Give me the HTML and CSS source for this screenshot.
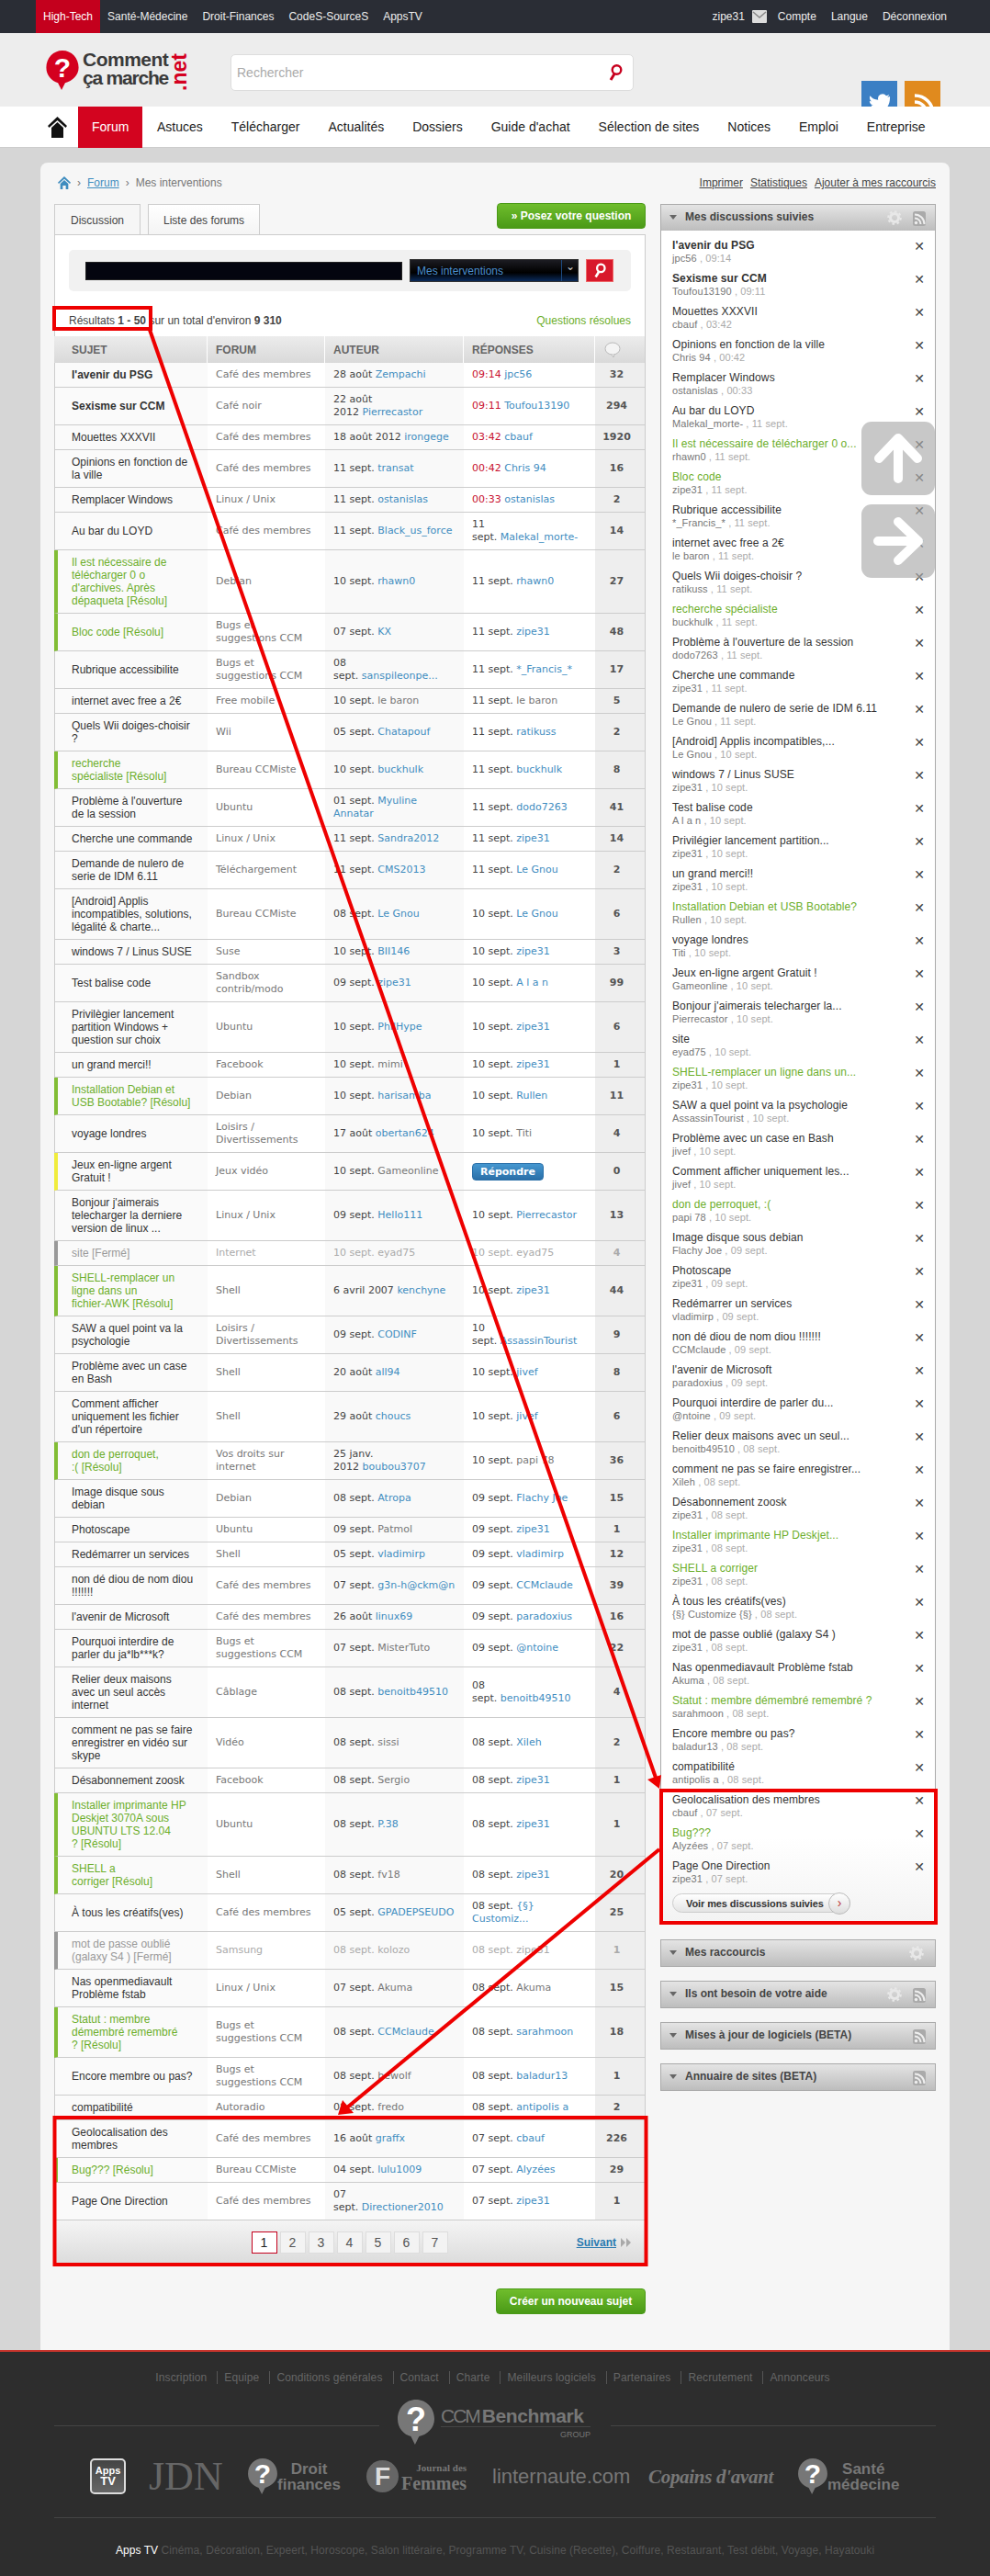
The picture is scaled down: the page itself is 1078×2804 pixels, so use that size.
FILE: index.html
```html
<!DOCTYPE html>
<html lang="fr">

<head>
    <meta charset="UTF-8">
    <title>Mes interventions - Forum</title>
    <link rel="stylesheet" href="styles.css">
</head>

<body>
    <svg class="defs" width="0" height="0">
        <symbol id="gear" viewBox="0 0 16 16">
            <circle cx="8" cy="8" r="4.5" fill="none" stroke="#e8e8e8" stroke-width="3" />
            <circle cx="8" cy="8" r="6.8" fill="none" stroke="#e8e8e8" stroke-width="2" stroke-dasharray="2.6 2.7" />
        </symbol>
        <symbol id="rss" viewBox="0 0 14 16">
            <rect width="14" height="16" rx="2.5" fill="#aaa" />
            <circle cx="3.5" cy="12.5" r="1.7" fill="#eee" />
            <path d="M2 7.5a6.5 6.5 0 0 1 6.5 6.5M2 3.5A10.500 10.500 0 0 1 12.500 14" fill="none" stroke="#eee" stroke-width="2" />
        </symbol>
        <symbol id="mark" viewBox="0 0 36 44">
            <path d="M18 0C8 0 0 8 0 19c0 9 6 15 13 17l4 8 4-8c8-2 15-8 15-17C36 8 28 0 18 0z" />
        </symbol>
    </svg>

    <div class="topbar">
        <div class="toplinks">
            <a class="on">High-Tech</a>
            <a>Santé-Médecine</a>
            <a>Droit-Finances</a>
            <a>CodeS-SourceS</a>
            <a>AppsTV</a>
        </div>
        <div class="toplinks">
            <a class="me">zipe31</a>
            <svg class="mail" width="16" height="14" viewBox="0 0 16 14">
                <rect width="16" height="14" rx="1" fill="#ddd" />
                <path d="M1 2l7 6 7-6" fill="none" stroke="#888" stroke-width="1.500" />
            </svg>
            <a>Compte</a>
            <a>Langue</a>
            <a>Déconnexion</a>
        </div>
    </div>

    <div class="header">
        <div class="logo">
            <div class="bubble red">
                <svg width="36" height="43"><use href="#mark" /></svg>
                <span class="qm">?</span>
            </div>
            <div class="logoName">
                <span class="l1">Comment</span>
                <span class="l2">ça marche</span>
            </div>
            <span class="dotnet">.net</span>
        </div>
        <div class="search">
            <span>Rechercher</span>
            <svg width="16" height="20" viewBox="0 0 16 20">
                <circle cx="9.500" cy="7" r="4.800" fill="none" stroke="#c8001e" stroke-width="2.400" />
                <path d="M7 11.500L3 18" stroke="#c8001e" stroke-width="3" />
            </svg>
        </div>
        <div class="social">
            <div class="tw">
                <svg width="24" height="24" viewBox="0 0 24 24">
                    <path d="M23 5c-1 .5-2 .7-3 .8 1-.6 2-1.600 2.300-2.800-1 .6-2.100 1-3.300 1.200a5 5 0 0 0-8.700 4.600C6.300 8.600 3.300 7 1.500 4.300c-1 1.800-.5 4.500 1.500 6-.8 0-1.600-.2-2.200-.6 0 2.500 1.700 4.500 4 5-.7.200-1.500.2-2.200.1.600 2 2.500 3.400 4.600 3.500C5.200 20 2.600 20.800 0 20.500 9 26 24 21 23 5z" fill="#fff" />
                </svg>
            </div>
            <div class="rs">
                <svg width="22" height="26" viewBox="0 0 22 26">
                    <circle cx="5" cy="21" r="3" fill="#fff" />
                    <path d="M2 11a13 13 0 0 1 13 13M2 4a20 20 0 0 1 20 20" fill="none" stroke="#fff" stroke-width="3.500" />
                </svg>
            </div>
        </div>
    </div>

    <div class="nav">
        <svg class="home" width="21" height="23" viewBox="0 0 21 23">
            <path d="M10.500 0L21 10l-1.500 2L10.500 4 1.500 12 0 10z" fill="#111" />
            <path d="M4 12l6.500-6 6.500 6v11H4z" fill="#111" />
        </svg>
        <a class="on">Forum</a>
        <a>Astuces</a>
        <a>Télécharger</a>
        <a>Actualités</a>
        <a>Dossiers</a>
        <a>Guide d'achat</a>
        <a>Sélection de sites</a>
        <a>Notices</a>
        <a>Emploi</a>
        <a>Entreprise</a>
    </div>

    <div class="page">
        <div class="crumbs">
            <div class="trail">
                <svg width="14" height="14" viewBox="0 0 21 21">
                    <path d="M10.500 0L21 10l-1.500 2L10.500 4 1.500 12 0 10z" fill="#3f8dbf" />
                    <path d="M4 12l6.500-6 6.500 6v9h-4v-6H8v6H4z" fill="#3f8dbf" />
                </svg>
                <span>›</span><a>Forum</a><span>›</span><span>Mes interventions</span>
            </div>
            <div class="tools">
                <a>Imprimer</a>
                <a>Statistiques</a>
                <a>Ajouter à mes raccourcis</a>
            </div>
        </div>

        <div class="columns">
            <div class="mainCol">
                <div class="tabRow">
                    <div class="tabs">
                        <div class="tab active">Discussion</div>
                        <div class="tab">Liste des forums</div>
                    </div>
                    <a class="greenBtn ask">» Posez votre question</a>
                </div>

                <div class="box">
                    <div class="filter">
                        <div class="blackInput"></div>
                        <div class="blackSelect"><span>Mes interventions</span><i>⌄</i></div>
                        <div class="goBtn">
                            <svg width="14" height="19" viewBox="0 0 16 20">
                                <circle cx="9.500" cy="7" r="4.800" fill="none" stroke="#fff" stroke-width="2.600" />
                                <path d="M7 11.500L3 18" stroke="#fff" stroke-width="3" />
                            </svg>
                        </div>
                    </div>

                    <div class="results">
                        <span>Résultats <b>1 - 50</b> sur un total d'environ <b>9 310</b></span>
                        <a>Questions résolues</a>
                    </div>

                    <table class="topics">
                        <thead>
                            <tr>
                                <th>SUJET</th>
                                <th>FORUM</th>
                                <th>AUTEUR</th>
                                <th>RÉPONSES</th>
                                <th>
                                    <svg width="18" height="17" viewBox="0 0 18 17">
                                        <ellipse cx="9" cy="7.500" rx="8" ry="6.500" fill="#f4f4f4" stroke="#bbb" />
                                        <path d="M8 14l2 3 1-3.500" fill="#f4f4f4" stroke="#bbb" />
                                    </svg>
                                </th>
                            </tr>
                        </thead>
                        <tbody>
                            <tr class="new"><td>l'avenir du PSG</td><td>Café des membres</td><td>28 août <a>Zempachi</a></td><td><span class="hr">09:14</span> <a>jpc56</a></td><td>32</td></tr>
                            <tr class="new"><td>Sexisme sur CCM</td><td>Café noir</td><td>22 août<br>2012 <a>Pierrecastor</a></td><td><span class="hr">09:11</span> <a>Toufou13190</a></td><td>294</td></tr>
                            <tr><td>Mouettes XXXVII</td><td>Café des membres</td><td>18 août 2012 <a>irongege</a></td><td><span class="hr">03:42</span> <a>cbauf</a></td><td>1920</td></tr>
                            <tr><td>Opinions en fonction de<br>la ville</td><td>Café des membres</td><td>11 sept. <a>transat</a></td><td><span class="hr">00:42</span> <a>Chris 94</a></td><td>16</td></tr>
                            <tr><td>Remplacer Windows</td><td>Linux / Unix</td><td>11 sept. <a>ostanislas</a></td><td><span class="hr">00:33</span> <a>ostanislas</a></td><td>2</td></tr>
                            <tr><td>Au bar du LOYD</td><td>Café des membres</td><td>11 sept. <a>Black_us_force</a></td><td>11<br>sept. <a>Malekal_morte-</a></td><td>14</td></tr>
                            <tr class="solved"><td>Il est nécessaire de<br>télécharger 0 o<br>d'archives. Après<br>dépaqueta [Résolu]</td><td>Debian</td><td>10 sept. <a>rhawn0</a></td><td>11 sept. <a>rhawn0</a></td><td>27</td></tr>
                            <tr class="solved"><td>Bloc code [Résolu]</td><td>Bugs et<br>suggestions CCM</td><td>07 sept. <a>KX</a></td><td>11 sept. <a>zipe31</a></td><td>48</td></tr>
                            <tr><td>Rubrique accessibilite</td><td>Bugs et<br>suggestions CCM</td><td>08<br>sept. <a>sanspileonpe...</a></td><td>11 sept. <a>*_Francis_*</a></td><td>17</td></tr>
                            <tr><td>internet avec free a 2€</td><td>Free mobile</td><td>10 sept. <span class="nm">le baron</span></td><td>11 sept. <span class="nm">le baron</span></td><td>5</td></tr>
                            <tr><td>Quels Wii doiges-choisir<br>?</td><td>Wii</td><td>05 sept. <a>Chatapouf</a></td><td>11 sept. <a>ratikuss</a></td><td>2</td></tr>
                            <tr class="solved"><td>recherche<br>spécialiste [Résolu]</td><td>Bureau CCMiste</td><td>10 sept. <a>buckhulk</a></td><td>11 sept. <a>buckhulk</a></td><td>8</td></tr>
                            <tr><td>Problème à l'ouverture<br>de la session</td><td>Ubuntu</td><td>01 sept. <a>Myuline<br>Annatar</a></td><td>11 sept. <a>dodo7263</a></td><td>41</td></tr>
                            <tr><td>Cherche une commande</td><td>Linux / Unix</td><td>11 sept. <a>Sandra2012</a></td><td>11 sept. <a>zipe31</a></td><td>14</td></tr>
                            <tr><td>Demande de nulero de<br>serie de IDM 6.11</td><td>Téléchargement</td><td>11 sept. <a>CMS2013</a></td><td>11 sept. <a>Le Gnou</a></td><td>2</td></tr>
                            <tr><td>[Android] Applis<br>incompatibles, solutions,<br>légalité &amp; charte...</td><td>Bureau CCMiste</td><td>08 sept. <a>Le Gnou</a></td><td>10 sept. <a>Le Gnou</a></td><td>6</td></tr>
                            <tr><td>windows 7 / Linus SUSE</td><td>Suse</td><td>10 sept. <a>BII146</a></td><td>10 sept. <a>zipe31</a></td><td>3</td></tr>
                            <tr><td>Test balise code</td><td>Sandbox<br>contrib/modo</td><td>09 sept. <a>zipe31</a></td><td>10 sept. <a>A l a n</a></td><td>99</td></tr>
                            <tr><td>Privilègier lancement<br>partition Windows +<br>question sur choix</td><td>Ubuntu</td><td>10 sept. <a>PhilHype</a></td><td>10 sept. <a>zipe31</a></td><td>6</td></tr>
                            <tr><td>un grand merci!!</td><td>Facebook</td><td>10 sept. <span class="nm">mimi</span></td><td>10 sept. <a>zipe31</a></td><td>1</td></tr>
                            <tr class="solved"><td>Installation Debian et<br>USB Bootable? [Résolu]</td><td>Debian</td><td>10 sept. <a>harisamba</a></td><td>10 sept. <a>Rullen</a></td><td>11</td></tr>
                            <tr><td>voyage londres</td><td>Loisirs /<br>Divertissements</td><td>17 août <a>obertan624</a></td><td>10 sept. <span class="nm">Titi</span></td><td>4</td></tr>
                            <tr class="open"><td>Jeux en-ligne argent<br>Gratuit !</td><td>Jeux vidéo</td><td>10 sept. <span class="nm">Gameonline</span></td><td><a class="answer">Répondre</a></td><td>0</td></tr>
                            <tr><td>Bonjour j'aimerais<br>telecharger la derniere<br>version de linux ...</td><td>Linux / Unix</td><td>09 sept. <a>Hello111</a></td><td>10 sept. <a>Pierrecastor</a></td><td>13</td></tr>
                            <tr class="closed"><td>site [Fermé]</td><td>Internet</td><td>10 sept. eyad75</td><td>10 sept. eyad75</td><td>4</td></tr>
                            <tr class="solved"><td>SHELL-remplacer un<br>ligne dans un<br>fichier-AWK [Résolu]</td><td>Shell</td><td>6 avril 2007 <a>kenchyne</a></td><td>10 sept. <a>zipe31</a></td><td>44</td></tr>
                            <tr><td>SAW a quel point va la<br>psychologie</td><td>Loisirs /<br>Divertissements</td><td>09 sept. <a>CODINF</a></td><td>10<br>sept. <a>AssassinTourist</a></td><td>9</td></tr>
                            <tr><td>Problème avec un case<br>en Bash</td><td>Shell</td><td>20 août <a>all94</a></td><td>10 sept. <a>jivef</a></td><td>8</td></tr>
                            <tr><td>Comment afficher<br>uniquement les fichier<br>d'un répertoire</td><td>Shell</td><td>29 août <a>choucs</a></td><td>10 sept. <a>jivef</a></td><td>6</td></tr>
                            <tr class="solved"><td>don de perroquet,<br>:( [Résolu]</td><td>Vos droits sur<br>internet</td><td>25 janv.<br>2012 <a>boubou3707</a></td><td>10 sept. <span class="nm">papi 78</span></td><td>36</td></tr>
                            <tr><td>Image disque sous<br>debian</td><td>Debian</td><td>08 sept. <a>Atropa</a></td><td>09 sept. <a>Flachy Joe</a></td><td>15</td></tr>
                            <tr><td>Photoscape</td><td>Ubuntu</td><td>09 sept. <span class="nm">Patmol</span></td><td>09 sept. <a>zipe31</a></td><td>1</td></tr>
                            <tr><td>Redémarrer un services</td><td>Shell</td><td>05 sept. <a>vladimirp</a></td><td>09 sept. <a>vladimirp</a></td><td>12</td></tr>
                            <tr><td>non dé diou de nom diou<br>!!!!!!!</td><td>Café des membres</td><td>07 sept. <a>g3n-h@ckm@n</a></td><td>09 sept. <a>CCMclaude</a></td><td>39</td></tr>
                            <tr><td>l'avenir de Microsoft</td><td>Café des membres</td><td>26 août <a>linux69</a></td><td>09 sept. <a>paradoxius</a></td><td>16</td></tr>
                            <tr><td>Pourquoi interdire de<br>parler du ja*lb***k?</td><td>Bugs et<br>suggestions CCM</td><td>07 sept. <span class="nm">MisterTuto</span></td><td>09 sept. <a>@ntoine</a></td><td>22</td></tr>
                            <tr><td>Relier deux maisons<br>avec un seul accès<br>internet</td><td>Câblage</td><td>08 sept. <a>benoitb49510</a></td><td>08<br>sept. <a>benoitb49510</a></td><td>4</td></tr>
                            <tr><td>comment ne pas se faire<br>enregistrer en vidéo sur<br>skype</td><td>Vidéo</td><td>08 sept. <span class="nm">sissi</span></td><td>08 sept. <a>Xileh</a></td><td>2</td></tr>
                            <tr><td>Désabonnement zoosk</td><td>Facebook</td><td>08 sept. <span class="nm">Sergio</span></td><td>08 sept. <a>zipe31</a></td><td>1</td></tr>
                            <tr class="solved"><td>Installer imprimante HP<br>Deskjet 3070A sous<br>UBUNTU LTS 12.04<br>? [Résolu]</td><td>Ubuntu</td><td>08 sept. <a>P.38</a></td><td>08 sept. <a>zipe31</a></td><td>1</td></tr>
                            <tr class="solved"><td>SHELL a<br>corriger [Résolu]</td><td>Shell</td><td>08 sept. <span class="nm">fv18</span></td><td>08 sept. <a>zipe31</a></td><td>20</td></tr>
                            <tr><td>À tous les créatifs(ves)</td><td>Café des membres</td><td>05 sept. <a>GPADEPSEUDO</a></td><td>08 sept. <a>{§}<br>Customiz...</a></td><td>25</td></tr>
                            <tr class="closed"><td>mot de passe oublié<br>(galaxy S4 ) [Fermé]</td><td>Samsung</td><td>08 sept. kolozo</td><td>08 sept. zipe31</td><td>1</td></tr>
                            <tr><td>Nas openmediavault<br>Problème fstab</td><td>Linux / Unix</td><td>07 sept. <span class="nm">Akuma</span></td><td>08 sept. <span class="nm">Akuma</span></td><td>15</td></tr>
                            <tr class="solved"><td>Statut : membre<br>démembré remembré<br>? [Résolu]</td><td>Bugs et<br>suggestions CCM</td><td>08 sept. <a>CCMclaude</a></td><td>08 sept. <a>sarahmoon</a></td><td>18</td></tr>
                            <tr><td>Encore membre ou pas?</td><td>Bugs et<br>suggestions CCM</td><td>08 sept. <span class="nm">bewolf</span></td><td>08 sept. <a>baladur13</a></td><td>1</td></tr>
                            <tr><td>compatibilité</td><td>Autoradio</td><td>08 sept. <span class="nm">fredo</span></td><td>08 sept. <a>antipolis a</a></td><td>2</td></tr>
                            <tr><td>Geolocalisation des<br>membres</td><td>Café des membres</td><td>16 août <a>graffx</a></td><td>07 sept. <a>cbauf</a></td><td>226</td></tr>
                            <tr class="solved"><td>Bug??? [Résolu]</td><td>Bureau CCMiste</td><td>04 sept. <a>lulu1009</a></td><td>07 sept. <a>Alyzées</a></td><td>29</td></tr>
                            <tr><td>Page One Direction</td><td>Café des membres</td><td>07<br>sept. <a>Directioner2010</a></td><td>07 sept. <a>zipe31</a></td><td>1</td></tr>
                        </tbody>
                    </table>

                    <div class="pager">
                        <div></div>
                        <div class="pages">
                            <a class="cur">1</a><a>2</a><a>3</a><a>4</a><a>5</a><a>6</a><a>7</a>
                        </div>
                        <div class="next">
                            <a>Suivant</a>
                            <svg width="11" height="10" viewBox="0 0 11 10"><path d="M0 0l5 5-5 5zM6 0l5 5-5 5z" fill="#aaa" /></svg>
                        </div>
                    </div>
                </div>

                <div class="createRow"><a class="greenBtn create">Créer un nouveau sujet</a></div>
            </div>

            <div class="sideCol">
                <div class="panel openPanel">
                    <div class="panelHead">
                        <i></i><span>Mes discussions suivies</span>
                        <svg class="gear"><use href="#gear" /></svg>
                        <svg class="rss"><use href="#rss" /></svg>
                    </div>
                    <div class="panelBody">
                        <ul class="follow">
                            <li class="new"><div><p>l'avenir du PSG</p><small>jpc56 <span>, 09:14</span></small></div><b>✕</b></li>
                            <li class="new"><div><p>Sexisme sur CCM</p><small>Toufou13190 <span>, 09:11</span></small></div><b>✕</b></li>
                            <li><div><p>Mouettes XXXVII</p><small>cbauf <span>, 03:42</span></small></div><b>✕</b></li>
                            <li><div><p>Opinions en fonction de la ville</p><small>Chris 94 <span>, 00:42</span></small></div><b>✕</b></li>
                            <li><div><p>Remplacer Windows</p><small>ostanislas <span>, 00:33</span></small></div><b>✕</b></li>
                            <li><div><p>Au bar du LOYD</p><small>Malekal_morte- <span>, 11 sept.</span></small></div><b>✕</b></li>
                            <li class="solved"><div><p>Il est nécessaire de télécharger 0 o...</p><small>rhawn0 <span>, 11 sept.</span></small></div><b>✕</b></li>
                            <li class="solved"><div><p>Bloc code</p><small>zipe31 <span>, 11 sept.</span></small></div><b>✕</b></li>
                            <li><div><p>Rubrique accessibilite</p><small>*_Francis_* <span>, 11 sept.</span></small></div><b>✕</b></li>
                            <li><div><p>internet avec free a 2€</p><small>le baron <span>, 11 sept.</span></small></div><b>✕</b></li>
                            <li><div><p>Quels Wii doiges-choisir ?</p><small>ratikuss <span>, 11 sept.</span></small></div><b>✕</b></li>
                            <li class="solved"><div><p>recherche spécialiste</p><small>buckhulk <span>, 11 sept.</span></small></div><b>✕</b></li>
                            <li><div><p>Problème à l'ouverture de la session</p><small>dodo7263 <span>, 11 sept.</span></small></div><b>✕</b></li>
                            <li><div><p>Cherche une commande</p><small>zipe31 <span>, 11 sept.</span></small></div><b>✕</b></li>
                            <li><div><p>Demande de nulero de serie de IDM 6.11</p><small>Le Gnou <span>, 11 sept.</span></small></div><b>✕</b></li>
                            <li><div><p>[Android] Applis incompatibles,...</p><small>Le Gnou <span>, 10 sept.</span></small></div><b>✕</b></li>
                            <li><div><p>windows 7 / Linus SUSE</p><small>zipe31 <span>, 10 sept.</span></small></div><b>✕</b></li>
                            <li><div><p>Test balise code</p><small>A l a n <span>, 10 sept.</span></small></div><b>✕</b></li>
                            <li><div><p>Privilégier lancement partition...</p><small>zipe31 <span>, 10 sept.</span></small></div><b>✕</b></li>
                            <li><div><p>un grand merci!!</p><small>zipe31 <span>, 10 sept.</span></small></div><b>✕</b></li>
                            <li class="solved"><div><p>Installation Debian et USB Bootable?</p><small>Rullen <span>, 10 sept.</span></small></div><b>✕</b></li>
                            <li><div><p>voyage londres</p><small>Titi <span>, 10 sept.</span></small></div><b>✕</b></li>
                            <li><div><p>Jeux en-ligne argent Gratuit !</p><small>Gameonline <span>, 10 sept.</span></small></div><b>✕</b></li>
                            <li><div><p>Bonjour j'aimerais telecharger la...</p><small>Pierrecastor <span>, 10 sept.</span></small></div><b>✕</b></li>
                            <li><div><p>site</p><small>eyad75 <span>, 10 sept.</span></small></div><b>✕</b></li>
                            <li class="solved"><div><p>SHELL-remplacer un ligne dans un...</p><small>zipe31 <span>, 10 sept.</span></small></div><b>✕</b></li>
                            <li><div><p>SAW a quel point va la psychologie</p><small>AssassinTourist <span>, 10 sept.</span></small></div><b>✕</b></li>
                            <li><div><p>Problème avec un case en Bash</p><small>jivef <span>, 10 sept.</span></small></div><b>✕</b></li>
                            <li><div><p>Comment afficher uniquement les...</p><small>jivef <span>, 10 sept.</span></small></div><b>✕</b></li>
                            <li class="solved"><div><p>don de perroquet, :(</p><small>papi 78 <span>, 10 sept.</span></small></div><b>✕</b></li>
                            <li><div><p>Image disque sous debian</p><small>Flachy Joe <span>, 09 sept.</span></small></div><b>✕</b></li>
                            <li><div><p>Photoscape</p><small>zipe31 <span>, 09 sept.</span></small></div><b>✕</b></li>
                            <li><div><p>Redémarrer un services</p><small>vladimirp <span>, 09 sept.</span></small></div><b>✕</b></li>
                            <li><div><p>non dé diou de nom diou !!!!!!!</p><small>CCMclaude <span>, 09 sept.</span></small></div><b>✕</b></li>
                            <li><div><p>l'avenir de Microsoft</p><small>paradoxius <span>, 09 sept.</span></small></div><b>✕</b></li>
                            <li><div><p>Pourquoi interdire de parler du...</p><small>@ntoine <span>, 09 sept.</span></small></div><b>✕</b></li>
                            <li><div><p>Relier deux maisons avec un seul...</p><small>benoitb49510 <span>, 08 sept.</span></small></div><b>✕</b></li>
                            <li><div><p>comment ne pas se faire enregistrer...</p><small>Xileh <span>, 08 sept.</span></small></div><b>✕</b></li>
                            <li><div><p>Désabonnement zoosk</p><small>zipe31 <span>, 08 sept.</span></small></div><b>✕</b></li>
                            <li class="solved"><div><p>Installer imprimante HP Deskjet...</p><small>zipe31 <span>, 08 sept.</span></small></div><b>✕</b></li>
                            <li class="solved"><div><p>SHELL a corriger</p><small>zipe31 <span>, 08 sept.</span></small></div><b>✕</b></li>
                            <li><div><p>À tous les créatifs(ves)</p><small>{§} Customize {§} <span>, 08 sept.</span></small></div><b>✕</b></li>
                            <li><div><p>mot de passe oublié (galaxy S4 )</p><small>zipe31 <span>, 08 sept.</span></small></div><b>✕</b></li>
                            <li><div><p>Nas openmediavault Problème fstab</p><small>Akuma <span>, 08 sept.</span></small></div><b>✕</b></li>
                            <li class="solved"><div><p>Statut : membre démembré remembré ?</p><small>sarahmoon <span>, 08 sept.</span></small></div><b>✕</b></li>
                            <li><div><p>Encore membre ou pas?</p><small>baladur13 <span>, 08 sept.</span></small></div><b>✕</b></li>
                            <li><div><p>compatibilité</p><small>antipolis a <span>, 08 sept.</span></small></div><b>✕</b></li>
                            <li><div><p>Geolocalisation des membres</p><small>cbauf <span>, 07 sept.</span></small></div><b>✕</b></li>
                            <li class="solved"><div><p>Bug???</p><small>Alyzées <span>, 07 sept.</span></small></div><b>✕</b></li>
                            <li><div><p>Page One Direction</p><small>zipe31 <span>, 07 sept.</span></small></div><b>✕</b></li>
                        </ul>
                        <a class="seeAll"><span>Voir mes discussions suivies</span><i>›</i></a>
                    </div>
                </div>

                <div class="panel">
                    <div class="panelHead"><i></i><span>Mes raccourcis</span><svg class="gear solo"><use href="#gear" /></svg></div>
                </div>
                <div class="panel">
                    <div class="panelHead"><i></i><span>Ils ont besoin de votre aide</span><svg class="gear"><use href="#gear" /></svg><svg class="rss"><use href="#rss" /></svg></div>
                </div>
                <div class="panel">
                    <div class="panelHead"><i></i><span>Mises à jour de logiciels (BETA)</span><svg class="rss"><use href="#rss" /></svg></div>
                </div>
                <div class="panel">
                    <div class="panelHead"><i></i><span>Annuaire de sites (BETA)</span><svg class="rss"><use href="#rss" /></svg></div>
                </div>
            </div>
        </div>
    </div>

    <div class="footer">
        <div class="footLinks">
            <a>Inscription</a><a>Equipe</a><a>Conditions générales</a><a>Contact</a><a>Charte</a><a>Meilleurs logiciels</a><a>Partenaires</a><a>Recrutement</a><a>Annonceurs</a>
        </div>

        <div class="groupRow">
            <hr>
            <div class="groupLogo">
                <div class="bubble grey big">
                    <svg width="40" height="49"><use href="#mark" /></svg>
                    <span class="qm">?</span>
                </div>
                <div class="groupName">
                    <div class="gn"><span>CCM</span><b>Benchmark</b></div>
                    <small>GROUP</small>
                </div>
            </div>
            <hr>
        </div>

        <div class="brands">
            <div class="appsTv"><span>Apps</span><span>TV</span></div>
            <div class="jdn">JDN</div>
            <div class="duo droit">
                <div class="bubble grey"><svg width="32" height="39"><use href="#mark" /></svg><span class="qm">?</span></div>
                <div><span>Droit</span><span>finances</span></div>
            </div>
            <div class="femmes">
                <div class="disc"><span>F</span></div>
                <div><small>Journal des</small><b>Femmes</b></div>
            </div>
            <div class="linter">linternaute.com</div>
            <div class="copains">Copains d'avant</div>
            <div class="duo sante">
                <div class="bubble grey"><svg width="32" height="39"><use href="#mark" /></svg><span class="qm">?</span></div>
                <div><span>Santé</span><span>médecine</span></div>
            </div>
        </div>

        <hr class="footRule">

        <p class="footThemes"><b>Apps TV</b> Cinéma, Décoration, Expeert, Horoscope, Salon littéraire, Programme TV, Cuisine (Recette), Coiffure, Restaurant, Test débit, Voyage, Hayatouki</p>
    </div>

    <!-- annotations drawn over the capture -->
    <svg class="notes" width="1078" height="2804">
        <g fill="none" stroke="#ee0000" stroke-width="4">
            <rect x="59" y="335" width="105" height="23" />
            <rect x="59.500" y="2305" width="644" height="160" />
            <rect x="720" y="1949" width="299" height="144" />
            <path d="M163 359L714 1935" />
            <path d="M718 2013L378 2294" />
        </g>
        <path d="M718 1947L705 1937 720 1932z" fill="#ee0000" />
        <path d="M368 2302L373 2286 385 2300z" fill="#ee0000" />
    </svg>

    <div class="jump">
        <div class="jumpBtn">
            <svg width="56" height="56" viewBox="0 0 56 56">
                <path d="M28 6v44M7 28L28 6l21 22" fill="none" stroke="#fff" stroke-width="10" stroke-linecap="round" stroke-linejoin="round" />
            </svg>
        </div>
        <div class="jumpBtn">
            <svg width="56" height="56" viewBox="0 0 56 56">
                <path d="M6 28h44M28 7l22 21-22 21" fill="none" stroke="#fff" stroke-width="10" stroke-linecap="round" stroke-linejoin="round" />
            </svg>
        </div>
    </div>
</body>

</html>
```

FILE: styles.css
```css
* {
    box-sizing: border-box;
    margin: 0;
    padding: 0;
}

body {
    position: relative;
    width: 1078px;
    height: 2804px;
    overflow: hidden;
    background-color: #d6d6d6;
    font-family: "Liberation Sans", Arial, sans-serif;
    font-size: 12px;
    line-height: 14px;
    color: #333;
}

a {
    cursor: pointer;
}

.defs {
    position: absolute;
}

/* top black bar */
.topbar {
    display: flex;
    justify-content: space-between;
    height: 36px;
    padding: 0 39px;
    background-color: #2a2d35;
}

.toplinks {
    display: flex;
    align-items: center;
}

.toplinks a {
    display: block;
    padding: 11px 8px;
    height: 36px;
    color: #eee;
}

.toplinks a.on {
    background-color: #c4001d;
    color: #fff;
}

.toplinks a.me {
    padding-right: 4px;
}

.mail {
    margin: 0 4px;
}

/* logo + search */
.header {
    display: flex;
    height: 80px;
    padding-left: 50px;
    background-color: #ededed;
}

.logo {
    display: flex;
    width: 201px;
    padding-top: 19px;
}

.bubble {
    position: relative;
    flex: none;
}

.bubble svg {
    display: block;
}

.bubble .qm {
    position: absolute;
    inset: 0 0 6px 0;
    display: flex;
    align-items: center;
    justify-content: center;
    color: #fff;
    font-weight: bold;
    font-size: 30px;
}

.bubble.red {
    height: 43px;
    fill: #d4001f;
}

.bubble.grey {
    fill: #777;
}

.bubble.big .qm {
    font-size: 36px;
}

.logoName {
    display: flex;
    flex-direction: column;
    margin-left: 4px;
    font-weight: bold;
    font-size: 21px;
    line-height: 20px;
    color: #3a3a3a;
}

.l1 {
    letter-spacing: -.5px;
}

.l2 {
    letter-spacing: -1.2px;
    white-space: nowrap;
}

.dotnet {
    margin: 0 0 0 3px;
    height: 44px;
    writing-mode: vertical-rl;
    transform: rotate(180deg);
    text-align: left;
    font-weight: bold;
    font-size: 23px;
    line-height: 18px;
    color: #d4001f;
}

.search {
    display: flex;
    align-items: center;
    justify-content: space-between;
    width: 439px;
    height: 40px;
    margin-top: 23px;
    padding: 0 11px 0 6px;
    background-color: #fff;
    border: 1px solid #ddd;
    border-radius: 5px;
    font-size: 14px;
    color: #aaa;
}

.social {
    display: flex;
    gap: 8px;
    margin: 52px 0 0 248px;
}

.social div {
    width: 39px;
    height: 28px;
    overflow: hidden;
    text-align: center;
}

.social svg {
    margin-top: 12px;
}

.tw {
    background-color: #3b7fc4;
}

.rs {
    background-color: #e08a1e;
}

/* main navigation */
.nav {
    display: flex;
    align-items: center;
    height: 45px;
    padding-left: 52px;
    background-color: #fff;
    border-bottom: 1px solid #ccc;
    font-size: 14px;
    color: #222;
}

.home {
    margin-right: 12px;
}

.nav a {
    display: block;
    padding: 15px 15.5px;
    height: 45px;
    line-height: 15px;
}

.nav a.on {
    padding: 15px;
    background-color: #d3041f;
    color: #fff;
}

/* white card */
.page {
    width: 990px;
    height: 2381px;
    margin: 16px 0 0 44px;
    padding: 15px 15px 0;
    background-color: #f6f6f6;
    border-radius: 8px 8px 0 0;
}

.crumbs {
    display: flex;
    justify-content: space-between;
    padding: 0 0 0 4px;
    color: #777;
}

.trail {
    display: flex;
    gap: 7px;
}

.trail a {
    color: #3f8dbf;
    text-decoration: underline;
}

.tools {
    display: flex;
    gap: 8px;
}

.tools a {
    color: #444;
    text-decoration: underline;
}

.columns {
    display: flex;
    gap: 16px;
    margin-top: 15px;
}

.mainCol {
    width: 644px;
}

.sideCol {
    width: 300px;
    padding-top: 1px;
}

.tabRow {
    display: flex;
    justify-content: space-between;
    height: 34px;
}

.tabs {
    display: flex;
    gap: 8px;
    margin: 1px 0 0;
}

.tab {
    height: 33px;
    padding: 10px 16px;
    background-image: linear-gradient(#fff, #f4f4f4);
    border: 1px solid #ccc;
    border-bottom: 0;
    color: #444;
}

.tab.active {
    padding: 10px 17px;
    background-image: none;
    background-color: #f6f6f6;
}

.greenBtn {
    display: block;
    text-align: center;
    color: #fff;
    font-weight: bold;
    background-image: linear-gradient(#6fbd2c, #4a9a17);
    border: 1px solid #4a9a17;
    border-radius: 4px;
}

.ask {
    width: 162px;
    height: 28px;
    padding-top: 6px;
}

.box {
    background-color: #fff;
    border: 1px solid #ccc;
    border-bottom: 0;
}

.filter {
    display: flex;
    align-items: center;
    height: 45px;
    margin: 16px 15px 0;
    padding: 0 18px;
    background-color: #f1f1f1;
    border-radius: 5px;
}

.blackInput {
    width: 345px;
    height: 20px;
    background-color: #04050f;
    border: 1px solid #222;
}

.blackSelect {
    display: flex;
    justify-content: space-between;
    width: 184px;
    height: 25px;
    margin: 0 8px;
    padding: 5px 0 0 7px;
    background-image: linear-gradient(#1c1c22, #000 60%, #0a2a5a);
    border: 1px solid #333;
    color: #4a8fd0;
}

.blackSelect i {
    width: 18px;
    margin-top: -5px;
    padding-left: 4px;
    border-left: 1px solid #1c4a80;
    color: #ccc;
    font-style: normal;
}

.goBtn {
    display: flex;
    align-items: center;
    justify-content: center;
    width: 30px;
    height: 25px;
    background-color: #d8192c;
    border: 1px solid #e66;
}

.results {
    display: flex;
    justify-content: space-between;
    margin: 25px 15px 10px;
    color: #444;
}

.results a {
    color: #6cae2a;
}

/* topic table */
.topics {
    width: 643px;
    margin-left: -1px;
    table-layout: fixed;
    border-collapse: separate;
    border-spacing: 0;
    font-family: "DejaVu Sans", Verdana, sans-serif;
    font-size: 11px;
}

.topics th {
    height: 29px;
    padding-left: 9px;
    background-image: linear-gradient(#ececec, #d9d9d9);
    border-right: 1px solid #fff;
    text-align: left;
    font-family: "Liberation Sans", Arial, sans-serif;
    font-size: 12px;
    color: #666;
}

.topics th:nth-child(1) {
    width: 167px;
    padding-left: 19px;
}

.topics th:nth-child(2) {
    width: 128px;
}

.topics th:nth-child(3) {
    width: 151px;
}

.topics th:nth-child(4) {
    width: 143px;
}

.topics th:nth-child(5) {
    padding-left: 10px;
    border-right: 0;
}

.topics th svg {
    display: block;
}

.topics td {
    padding: 6px 0 6px 9px;
    border-bottom: 1px solid #ccc;
    white-space: nowrap;
    vertical-align: middle;
    color: #444;
}

.topics td:nth-child(1) {
    padding-left: 18px;
    background-color: #fafafa;
    border-left: 1px solid #ccc;
    font-family: "Liberation Sans", Arial, sans-serif;
    font-size: 12px;
    color: #333;
}

.topics td:nth-child(2) {
    background-color: #fff;
    color: #777;
}

.topics td:nth-child(3) {
    background-color: #f9f9f9;
}

.topics td:nth-child(4) {
    background-color: #fff;
}

.topics td:nth-child(5) {
    padding: 6px 7px 6px 0;
    background-color: #eee;
    text-align: center;
    font-weight: bold;
    color: #555;
}

.topics a {
    color: #3f8dbf;
}

.hr {
    color: #c8102e;
}

.nm {
    color: #777;
}

.topics .new td:nth-child(1) {
    font-weight: bold;
}

.topics .solved td:nth-child(1) {
    padding-left: 15px;
    border-left: 4px solid #82bd35;
    color: #6cae2a;
}

.topics .open td:nth-child(1) {
    padding-left: 15px;
    border-left: 4px solid #f0ec3c;
}

.topics .closed td:nth-child(1) {
    padding-left: 15px;
    border-left: 4px solid #999;
    color: #999;
}

.topics .closed td {
    color: #aaa;
}

.topics .answer {
    display: inline-block;
    height: 19px;
    padding: 2px 8px;
    background-image: linear-gradient(#4597d0, #2a6fa8);
    border: 1px solid #2a6fa8;
    border-radius: 4px;
    color: #fff;
    font-weight: bold;
    vertical-align: middle;
}

/* pagination */
.pager {
    display: grid;
    grid-template-columns: 1fr auto 1fr;
    align-items: center;
    height: 47px;
    margin-left: -1px;
    background-image: linear-gradient(#f4f4f4, #dcdcdc);
}

.pages {
    display: flex;
    gap: 3px;
}

.pages a {
    width: 28px;
    height: 24px;
    padding-top: 4px;
    background-color: #f3f3f3;
    border: 1px solid #ddd;
    text-align: center;
    font-size: 14px;
    line-height: 15px;
    color: #555;
}

.pages a.cur {
    background-color: #fff;
    border-color: #c4001d;
    color: #222;
}

.next {
    display: flex;
    align-items: center;
    justify-content: flex-end;
    gap: 5px;
    padding-right: 15px;
    font-weight: bold;
}

.next a {
    color: #2a7ab0;
    text-decoration: underline;
}

.createRow {
    display: flex;
    justify-content: flex-end;
    margin-top: 27px;
}

.create {
    width: 163px;
    height: 28px;
    padding-top: 6px;
}

/* right column */
.panel {
    margin-bottom: 15px;
    border: 1px solid #aaa;
}

.openPanel {
    margin-bottom: 18px;
}

.panelHead {
    display: flex;
    align-items: center;
    height: 28px;
    padding: 0 10px 2px 9px;
    background-image: linear-gradient(#e4e4e4, #bdbdbd);
    font-weight: bold;
    color: #444;
}

.panelHead i {
    width: 0;
    height: 0;
    margin-right: 6px;
    border: 4px solid transparent;
    border-top: 5px solid #666;
    border-bottom: 0;
}

.panelHead span {
    flex: 1;
    margin-left: 3px;
}

.gear {
    width: 16px;
    height: 16px;
    margin: 2px 12px 0 0;
}

.gear.solo {
    margin-right: 2px;
}

.rss {
    width: 14px;
    height: 16px;
    margin-top: 4px;
}

.panelBody {
    height: 1841px;
    padding: 9px 10px 0 12px;
    background-image: linear-gradient(#fff 95%, #f3f3f3);
}

.follow {
    list-style: none;
}

.follow li {
    display: flex;
    justify-content: space-between;
    height: 36px;
}

.follow p {
    letter-spacing: .1px;
    color: #333;
}

.follow small {
    display: block;
    font-size: 11px;
    letter-spacing: .1px;
    color: #777;
}

.follow small span {
    color: #aaa;
}

.follow b {
    width: 14px;
    text-align: center;
    font-family: "DejaVu Sans", sans-serif;
    font-size: 14px;
    font-weight: bold;
    line-height: 16px;
    color: #444;
}

.follow .new p {
    font-weight: bold;
}

.follow .solved p {
    color: #6cae2a;
}

.seeAll {
    display: flex;
    align-items: center;
    width: 194px;
    height: 21px;
    margin-top: 1px;
    background-image: linear-gradient(#fff, #e4e4e4);
    border: 1px solid #ccc;
    border-radius: 11px;
    font-weight: bold;
    font-size: 11px;
    color: #333;
}

.seeAll span {
    flex: 1;
    padding-left: 14px;
    letter-spacing: -.1px;
}

.seeAll i {
    width: 24px;
    height: 24px;
    margin-right: -1px;
    background-image: linear-gradient(#fff, #ddd);
    border: 1px solid #bbb;
    border-radius: 50%;
    text-align: center;
    font-style: normal;
    font-weight: normal;
    font-size: 14px;
    line-height: 21px;
    color: #b33;
}

/* footer */
.footer {
    height: 246px;
    padding: 21px 59px 0;
    background-color: #2d2d2d;
    border-top: 2px solid #c9352d;
    color: #666;
}

.footLinks {
    display: flex;
    justify-content: center;
    padding-right: 1px;
    letter-spacing: .12px;
}

.footLinks a {
    padding: 0 11px 0 7px;
    border-right: 1px solid #555;
    color: #666;
}

.footLinks a:last-child {
    border-right: 0;
}

.groupRow {
    display: flex;
    margin-top: 17px;
}

.groupRow hr {
    flex: 1;
    height: 1px;
    margin-top: 28px;
    border: 0;
    background-color: #444;
}

.groupLogo {
    display: flex;
    gap: 7px;
    width: 252px;
    padding-left: 20px;
}

.groupName {
    width: 163px;
    padding-top: 8px;
    color: #777;
    text-align: right;
}

.gn {
    display: flex;
    align-items: baseline;
    gap: 3px;
    padding-bottom: 1px;
    border-bottom: 1px solid #444;
    font-size: 21px;
    line-height: 20px;
}

.gn span {
    letter-spacing: -2px;
}

.gn b {
    letter-spacing: -.4px;
}

.groupName small {
    display: block;
    margin-top: 3px;
    font-size: 9px;
    line-height: 10px;
    color: #777;
}

.brands {
    display: flex;
    align-items: center;
    gap: 25px;
    height: 39px;
    margin-top: 15px;
    padding-left: 39px;
    white-space: nowrap;
    color: #666;
}

.appsTv {
    display: flex;
    flex-direction: column;
    align-items: center;
    width: 39px;
    height: 39px;
    padding-top: 6px;
    background-image: linear-gradient(#444, #666);
    border: 2px solid #ddd;
    border-radius: 5px;
    font-weight: bold;
    font-size: 11px;
    line-height: 11px;
    color: #fff;
}

.appsTv span + span {
    font-size: 13px;
}

.jdn {
    width: 83px;
    font-family: "Liberation Serif", serif;
    font-size: 44px;
    line-height: 39px;
}

.duo {
    display: flex;
    align-items: center;
    width: 104px;
    font-weight: bold;
    font-size: 17px;
    line-height: 17px;
    color: #777;
}

.duo > div:last-child span {
    display: block;
    text-align: center;
}

.femmes {
    display: flex;
    align-items: center;
    gap: 3px;
    width: 112px;
    font-family: "Liberation Serif", serif;
    color: #777;
}

.disc {
    width: 35px;
    height: 35px;
    background-color: #666;
    border-radius: 50%;
    text-align: center;
    font-family: "Liberation Sans", sans-serif;
    font-weight: bold;
    font-size: 28px;
    line-height: 35px;
    color: #ddd;
}

.femmes small {
    display: block;
    font-weight: bold;
    font-size: 11px;
    text-align: right;
}

.femmes b {
    display: block;
    font-size: 20px;
    line-height: 20px;
}

.linter {
    width: 145px;
    font-size: 22px;
    color: #777;
}

.copains {
    width: 138px;
    font-family: "Liberation Serif", serif;
    font-style: italic;
    font-weight: bold;
    font-size: 21px;
    letter-spacing: -.3px;
    color: #777;
}

.footRule {
    height: 1px;
    margin-top: 25px;
    border: 0;
    background-color: #444;
}

.footThemes {
    margin-top: 28px;
    letter-spacing: .07px;
    text-align: center;
    color: #555;
}

.footThemes b {
    font-weight: normal;
    color: #fff;
}

/* red markers and the two scroll buttons sit on top of the page */
.notes {
    position: absolute;
    top: 0;
    left: 0;
    pointer-events: none;
}

.jump {
    position: absolute;
    top: 459px;
    left: 938px;
    display: flex;
    flex-direction: column;
    gap: 10px;
}

.jumpBtn {
    display: flex;
    align-items: center;
    justify-content: center;
    width: 80px;
    height: 80px;
    background-color: rgba(170, 170, 170, .65);
    border-radius: 11px;
}
```
